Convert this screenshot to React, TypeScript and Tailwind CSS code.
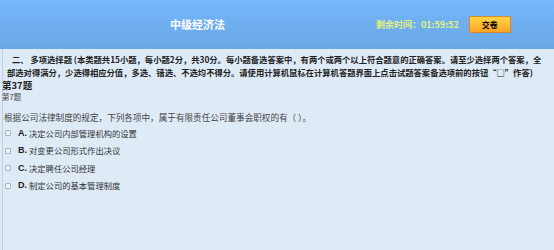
const font = "font-['Microsoft_YaHei','Noto_Sans_CJK_SC',sans-serif]";

const options = [
  { key: 'A', text: '决定公司内部管理机构的设置' },
  { key: 'B', text: '对变更公司形式作出决议' },
  { key: 'C', text: '决定聘任公司经理' },
  { key: 'D', text: '制定公司的基本管理制度' },
];

export default function App() {
  return (
    <div className={`w-[554px] h-[250px] flex flex-col bg-[#deebf7] ${font}`}>
      {/* 顶部 */}
      <div className="h-[49px] shrink-0 flex items-center bg-gradient-to-b from-[#74b7fc] to-[#6aa7e4]">
        <div className="ml-[170px] text-[11px] font-bold text-white leading-none">中级经济法</div>
        <div className="ml-[151px] text-[9px] font-bold text-[#e4f27c] leading-none">剩余时间：01:59:52</div>
        <button className="ml-[10px] w-[42px] h-[17px] flex items-center justify-center rounded-[1px] border border-[#d28a34] bg-gradient-to-b from-[#ffd545] to-[#ffa423] text-[8px] font-bold text-black leading-none">
          交卷
        </button>
      </div>

      {/* 内容 */}
      <div className="flex-1 ml-[2px] border-l border-[#bcd1e6] pl-[1px] pt-[4px] text-[#333]">
        <div className="pl-[3px] pr-[8px] text-[8.3px] font-bold leading-[13px] indent-[5px] text-[#222]">
          二、 多项选择题 (本类题共15小题，每小题2分，共30分。每小题备选答案中，有两个或两个以上符合题意的正确答案。请至少选择两个答案，全部选对得满分，少选得相应分值，多选、错选、不选均不得分。请使用计算机鼠标在计算机答题界面上点击试题答案备选项前的按钮“□”作答)
        </div>
        <div className="-ml-[2px] text-[9.5px] font-bold leading-[13px] text-[#222]">第37题</div>
        <div className="-ml-[2px] text-[7.5px] leading-[10px] text-[#444]">第7题</div>
        <div className="mt-[9px] text-[8.6px] leading-[12px] text-[#444]">
          根据公司法律制度的规定，下列各项中，属于有限责任公司董事会职权的有（ ）。
        </div>
        <div className="mt-[4px] flex flex-col gap-[5.5px]">
          {options.map((o) => (
            <div key={o.key} className="flex items-center h-[12px] text-[8.3px] leading-none text-[#333]">
              <span className="ml-[1px] w-[6px] h-[6px] border border-[#a9b4bf] bg-[#eef2f6] rounded-[1px]" />
              <span className="ml-[7px] font-bold font-['Liberation_Sans',sans-serif] text-[9px] text-[#222]">{o.key}.</span>
              <span className="ml-[2px]">{o.text}</span>
            </div>
          ))}
        </div>
      </div>
    </div>
  );
}
